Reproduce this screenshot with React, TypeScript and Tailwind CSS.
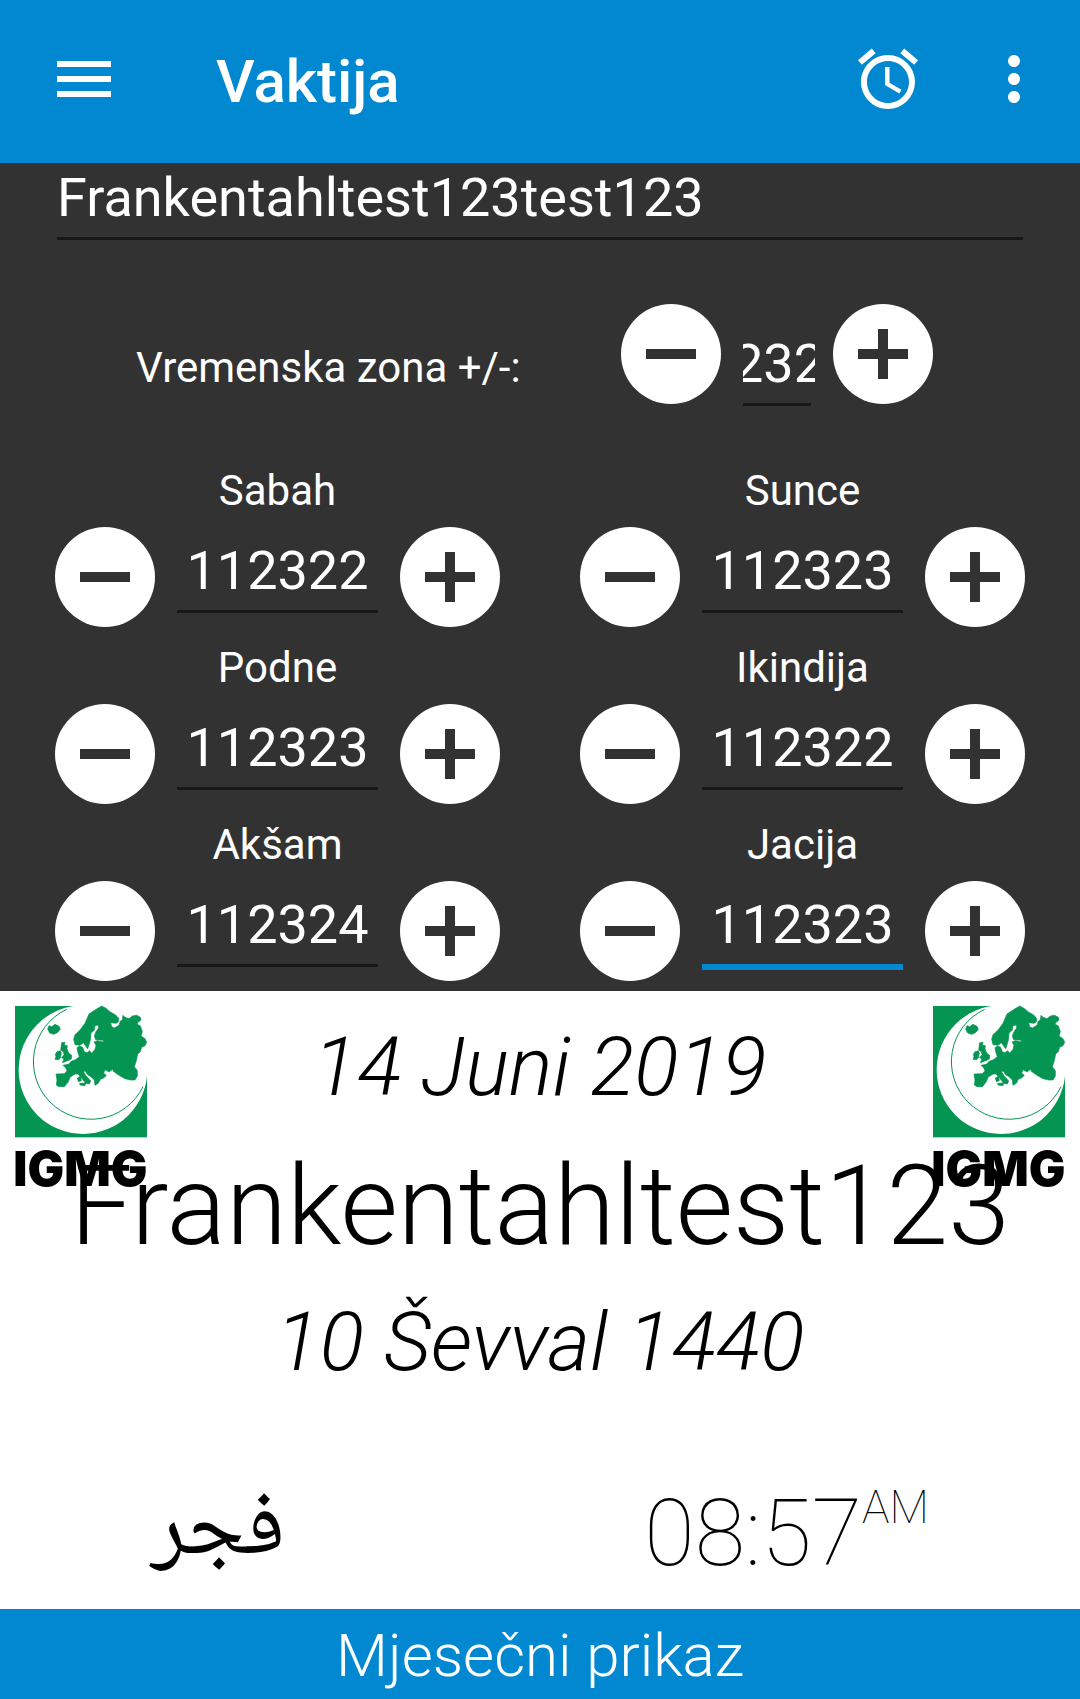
import { useEffect, useRef } from 'react';
import { MdAccessAlarm, MdMenu, MdMoreVert } from 'react-icons/md';

const prayers = [
  { name: 'Sabah', value: '112322' },
  { name: 'Sunce', value: '112323' },
  { name: 'Podne', value: '112323' },
  { name: 'Ikindija', value: '112322' },
  { name: 'Akšam', value: '112324' },
  { name: 'Jacija', value: '112323', active: true },
];

function RoundButton({ kind, label }: { kind: 'minus' | 'plus'; label: string }) {
  return (
    <button type="button" aria-label={label} className="size-[100px] shrink-0 rounded-full bg-white text-[#323232]">
      <svg viewBox="0 0 100 100" className="size-full" fill="currentColor" aria-hidden="true">
        <rect x="25" y="45" width="50" height="10" />
        {kind === 'plus' && <rect x="45" y="25" width="10" height="50" />}
      </svg>
    </button>
  );
}

function PrayerField({ name, value, active }: { name: string; value: string; active?: boolean }) {
  const id = `offset-${name}`;
  return (
    <div>
      <label htmlFor={id} className="block text-center text-[42px] leading-[48px]">
        {name}
      </label>
      <div className="mt-3 flex items-start gap-[22px]">
        <RoundButton kind="minus" label={`${name} -`} />
        <input
          id={id}
          defaultValue={value}
          className={
            active
              ? 'mt-3 h-[74px] w-0 min-w-0 flex-1 border-b-[3px] border-[#0288d1] pb-2 text-center text-[54px] shadow-[0_3px_0_#0288d1] outline-none'
              : 'mt-3 h-[74px] w-0 min-w-0 flex-1 border-b-[3px] border-[#181818] pb-2 text-center text-[54px] outline-none'
          }
        />
        <RoundButton kind="plus" label={`${name} +`} />
      </div>
    </div>
  );
}

function ZoneInput() {
  const ref = useRef<HTMLInputElement>(null);
  useEffect(() => {
    if (ref.current) ref.current.scrollLeft = 10;
  }, []);
  return (
    <div className="mt-7 mr-[18px] ml-[22px] w-[72px]">
      <input id="zone" ref={ref} defaultValue="232" className="block h-[71px] w-full pb-2 text-[54px] outline-none" />
      <div className="mr-1 h-[3px] bg-[#181818]" />
    </div>
  );
}

function Logo() {
  return (
    <svg viewBox="45 48 396 540" className="h-[180px] w-[132px] overflow-visible" role="img" aria-label="IGMG">
      <rect x="45" y="48" width="396" height="394" fill="#049552" />
      <circle cx="249" cy="239" r="193" fill="#fff" />
      <rect x="240" y="48" width="201" height="200" fill="#fff" />
      <path d="M200 58A173 173 0 1 0 429 290" fill="none" stroke="#049552" strokeWidth="3" />
      <g fill="#049552" stroke="#049552" strokeWidth="2" strokeLinejoin="round" transform="translate(135 30)">
        <path d="M170 18L183 25 195 35 212 45 221 55 220 66 213 70 197 68 200 80 208 84 222 76 226 63 232 60 234 46 240 52 252 56 262 48 275 46 286 52 288 60 278 68 276 72 286 78 292 95 288 108 300 116 305 127 300 137 290 142 286 155 278 162 274 182 268 200 277 212 277 228 270 240 257 240 240 236 222 226 205 214 203 208 192 216 180 209 176 220 184 226 176 234 166 238 160 250 150 256 148 240 138 230 128 224 120 212 116 216 122 226 137 243 133 252 122 250 108 232 100 222 90 222 75 232 70 245 58 260 42 260 34 255 36 240 33 222 58 221 66 212 62 203 54 196 70 193 80 183 90 180 103 170 98 155 96 143 104 138 113 142 118 155 126 158 134 152 140 160 150 148 153 136 147 126 157 122 175 126 175 121 152 119 148 108 153 95 161 84 160 75 150 77 148 90 138 100 137 115 134 128 128 146 122 138 115 128 105 136 90 134 86 118 90 104 105 90 120 70 132 42 150 30Z" />
        <path d="M50 128L60 127 58 136 67 137 66 147 71 159 80 166 79 177 68 182 52 188 57 177 50 173 57 164 55 155 47 150Z" />
        <path d="M36 155L46 152 49 160 46 174 41 179 30 178 33 170 31 163Z" />
        <path d="M8 87L12 77 20 80 30 73 42 79 46 88 37 98 26 103 14 99Z" />
        <path d="M104 250L122 249 120 257 105 255ZM97 234L107 229 109 242 100 245ZM101 223L108 222 106 230Z" />
      </g>
      <text x="40" y="588" fontSize="146" className="font-[Inter,sans-serif] font-black" fill="#000">
        IGMG
      </text>
    </svg>
  );
}

export default function App() {
  return (
    <div className="flex min-h-screen flex-col bg-white font-[Roboto,sans-serif] text-black">
      <header className="flex h-[163px] items-center bg-[#0288d1] pr-[30px] pb-[5px] pl-12 text-white">
        <button type="button" aria-label="Menu">
          <MdMenu size={72} />
        </button>
        <h1 className="ml-24 flex-1 pt-[5px] text-[60px] leading-[72px] font-medium">Vaktija</h1>
        <button type="button" aria-label="Alarm">
          <MdAccessAlarm size={72} />
        </button>
        <button type="button" aria-label="More options" className="ml-[54px]">
          <MdMoreVert size={72} />
        </button>
      </header>

      <section className="bg-[#323232] pt-[3px] pb-[10px] text-white">
        <div className="px-[57px]">
          <input
            aria-label="Naziv"
            defaultValue="Frankentahltest123test123"
            className="block h-[74px] w-full border-b-[3px] border-[#181818] pb-2 text-[54px] outline-none"
          />
        </div>
        <div className="mt-16 flex items-start pr-[147px] pl-[136px]">
          <label htmlFor="zone" className="mt-10 flex-1 text-[42px] leading-[48px] whitespace-nowrap">
            Vremenska zona +/-:
          </label>
          <RoundButton kind="minus" label="Vremenska zona -" />
          <ZoneInput />
          <RoundButton kind="plus" label="Vremenska zona +" />
        </div>
        <div className="mt-[61px] grid grid-cols-2 gap-x-20 gap-y-[17px] px-[55px]">
          {prayers.map((p) => (
            <PrayerField key={p.name} {...p} />
          ))}
        </div>
      </section>

      <main className="relative flex flex-1 flex-col pt-7 text-center">
        <div className="absolute inset-x-[15px] top-[15px] flex justify-between">
          <Logo />
          <Logo />
        </div>
        <p className="relative text-[82px] leading-[96px] font-light italic">14 Juni 2019</p>
        <h2 className="relative mt-[26px] text-[111px] leading-[130px] font-light whitespace-nowrap">Frankentahltest123</h2>
        <p className="relative mt-[23px] text-[82px] leading-[96px] font-light italic">10 Ševval 1440</p>
        <div className="mt-[84px] flex items-start justify-between px-[151px]">
          <span lang="ar" dir="rtl" className="font-['Noto_Naskh_Arabic','Noto_Sans_Arabic','DejaVu_Sans',sans-serif] text-[90px] leading-[120px]">
            فجر
          </span>
          <time className="flex items-start font-thin">
            <span className="text-[92px] leading-[120px]">08:57</span>
            <span className="text-[46px] leading-[66px]">AM</span>
          </time>
        </div>
      </main>

      <button type="button" className="h-[90px] bg-[#0288d1] pt-1 text-[60px] leading-[72px] font-light text-white">
        Mjesečni prikaz
      </button>
    </div>
  );
}
